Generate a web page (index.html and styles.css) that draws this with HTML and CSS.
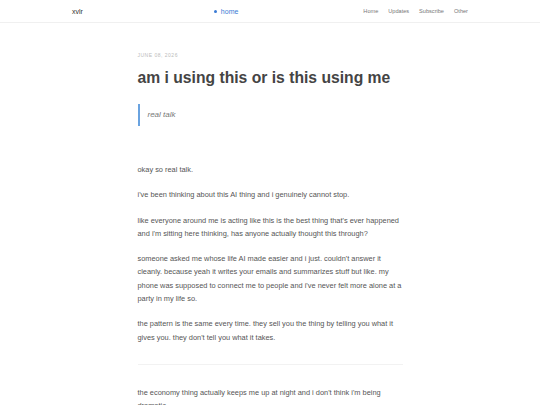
FILE: index.html
```html
<!DOCTYPE html>
<html>
<head>
<meta charset="utf-8">
<link rel="stylesheet" href="styles.css">
</head>
<body>
<header class="site-header">
  <div class="header-inner">
    <a class="logo" href="#">xvlr</a>
    <a class="current" href="#"><span class="dot"></span>home</a>
    <nav class="nav">
      <a href="#">Home</a>
      <a href="#">Updates</a>
      <a href="#">Subscribe</a>
      <a href="#">Other</a>
    </nav>
  </div>
</header>
<main class="post">
  <div class="date">June 08, 2026</div>
  <h1 class="title">am i using this or is this using me</h1>
  <blockquote class="quote">real talk</blockquote>
  <div class="body">
    <p>okay so real talk.</p>
    <p>i've been thinking about this AI thing and i genuinely cannot stop.</p>
    <p>like everyone around me is acting like this is the best thing that's ever happened and i'm sitting here thinking, has anyone actually thought this through?</p>
    <p>someone asked me whose life AI made easier and i just. couldn't answer it cleanly. because yeah it writes your emails and summarizes stuff but like. my phone was supposed to connect me to people and i've never felt more alone at a party in my life so.</p>
    <p>the pattern is the same every time. they sell you the thing by telling you what it gives you. they don't tell you what it takes.</p>
    <hr class="divider">
    <p>the economy thing actually keeps me up at night and i don't think i'm being dramatic.</p>
  </div>
</main>
</body>
</html>
```
FILE: styles.css
```css
html, body {
  margin: 0;
  padding: 0;
  background: #fff;
  font-family: "Liberation Sans", Arial, sans-serif;
  color: #555;
}
a { text-decoration: none; }
.site-header {
  border-bottom: 1px solid #f0f0f0;
}
.header-inner {
  width: 396px;
  margin: 0 auto;
  height: 22px;
  display: flex;
  align-items: center;
  justify-content: space-between;
}
.logo {
  color: #333;
  font-size: 7px;
}
.current {
  color: #3a7bd5;
  display: flex;
  align-items: center;
  gap: 4px;
  font-size: 7px;
  margin-left: 6px;
}
.dot {
  width: 3px;
  height: 3px;
  border-radius: 50%;
  background: #3a7bd5;
}
.nav {
  display: flex;
  gap: 10px;
  font-size: 5.6px;
}
.nav a { color: #777; }
.post {
  width: 265px;
  margin: 0 auto;
  padding-top: 29px;
}
.date {
  text-transform: uppercase;
  font-size: 5px;
  letter-spacing: 0.5px;
  color: #bbb;
}
.title {
  margin: 9px 0 0;
  font-size: 15.7px;
  font-weight: bold;
  color: #444;
  line-height: 22px;
}
.quote {
  margin: 15px 0 0;
  padding: 6px 0 6px 8px;
  border-left: 2px solid #6aa3e0;
  font-style: italic;
  font-size: 8px;
  color: #777;
  line-height: 10px;
}
.body {
  margin-top: 37px;
  font-size: 7.4px;
  line-height: 13.3px;
  color: #555;
}
.body p { margin: 0 0 12px; }
.divider {
  border: 0;
  border-top: 1px solid #f2f2f2;
  margin: 20px 0 21px;
}
```
